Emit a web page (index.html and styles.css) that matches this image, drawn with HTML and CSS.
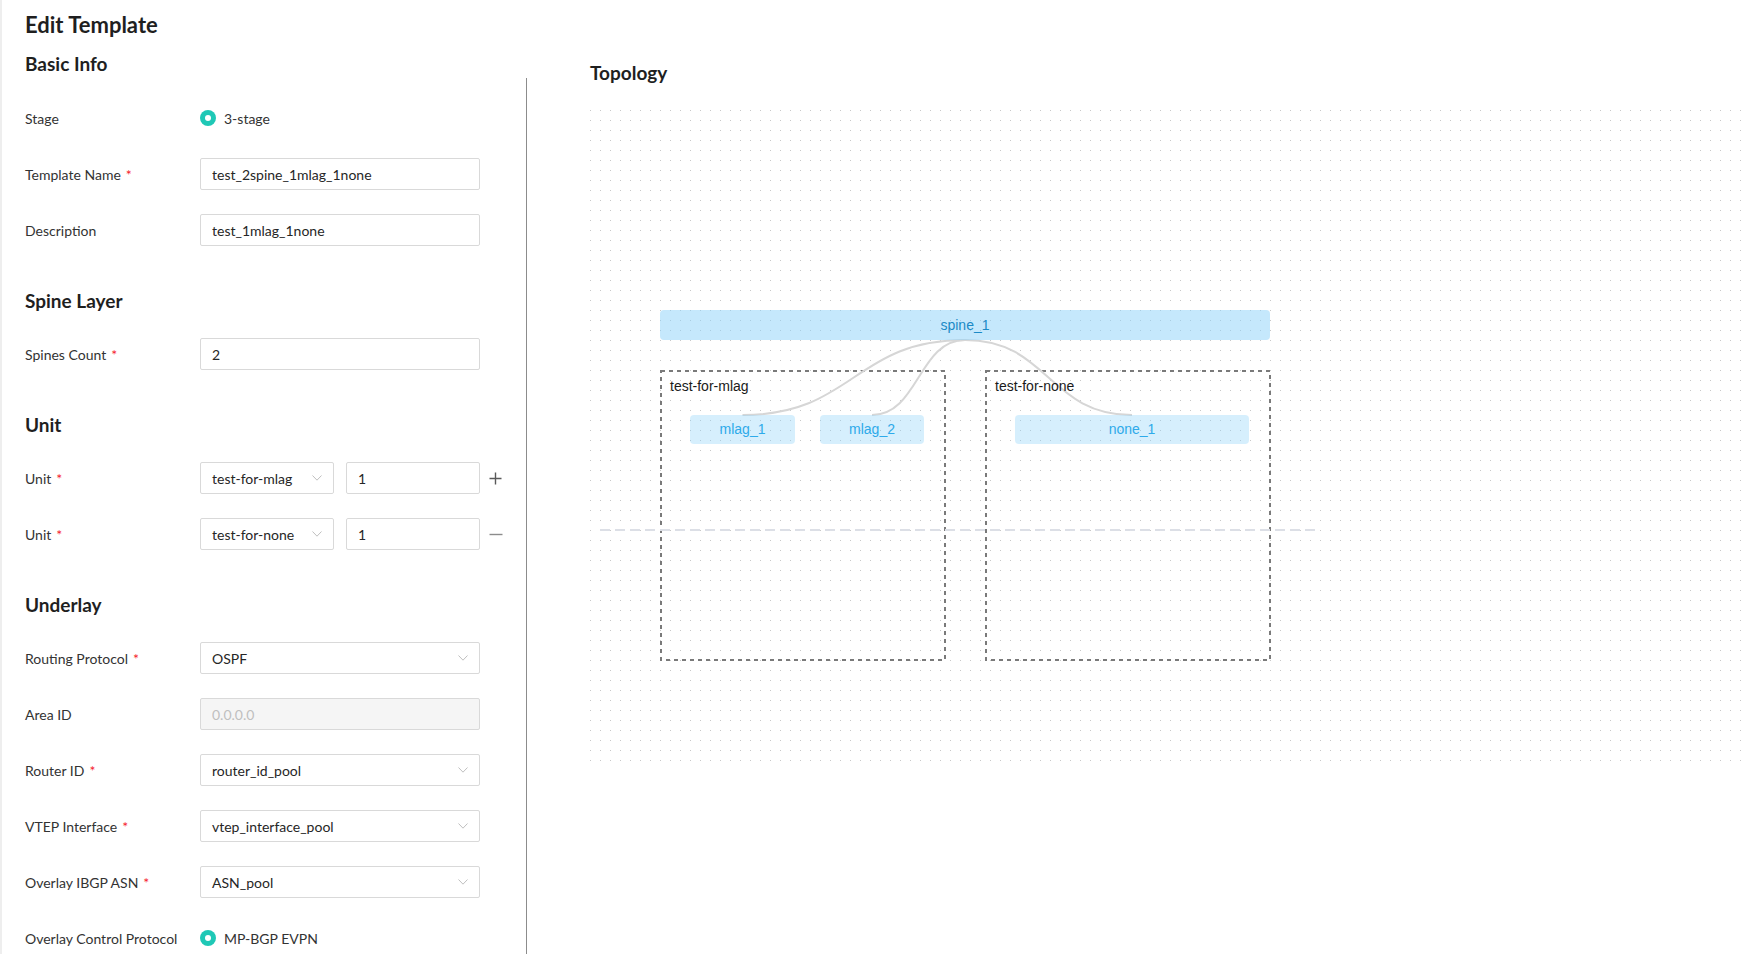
FILE: index.html
```html
<!DOCTYPE html>
<html lang="en">
<head>
    <meta charset="UTF-8">
    <meta name="viewport" content="width=device-width, initial-scale=1.0">
    <title>Edit Template</title>
    <link rel="stylesheet" href="styles.css">
</head>
<body>
    <div class="page">
        <h1 class="page-title">Edit Template</h1>
        <div class="layout">
            <div class="form-col">
                <h2 class="section-title">Basic Info</h2>
                <div class="form-body">
                    <section class="form-section">
                        <div class="form-row">
                            <label class="form-label">Stage</label>
                            <div class="radio"><span class="radio-dot"></span>3-stage</div>
                        </div>
                        <div class="form-row">
                            <label class="form-label">Template Name<span class="req">*</span></label>
                            <input class="input" type="text" value="test_2spine_1mlag_1none">
                        </div>
                        <div class="form-row">
                            <label class="form-label">Description</label>
                            <input class="input" type="text" value="test_1mlag_1none">
                        </div>
                    </section>

                    <section class="form-section">
                        <h2 class="section-title">Spine Layer</h2>
                        <div class="form-row">
                            <label class="form-label">Spines Count<span class="req">*</span></label>
                            <input class="input" type="text" value="2">
                        </div>
                    </section>

                    <section class="form-section">
                        <h2 class="section-title">Unit</h2>
                        <div class="form-row">
                            <label class="form-label">Unit<span class="req">*</span></label>
                            <div class="select select-short">
                                <span>test-for-mlag</span>
                                <svg class="chevron" width="10" height="6" viewBox="0 0 10 6"><polyline points="0.5,0.5 5,5.2 9.5,0.5"/></svg>
                            </div>
                            <input class="input input-short" type="text" value="1">
                            <button class="row-btn" type="button">
                                <svg width="13" height="13" viewBox="0 0 13 13"><path d="M6.5 0.5v12M0.5 6.5h12"/></svg>
                            </button>
                        </div>
                        <div class="form-row">
                            <label class="form-label">Unit<span class="req">*</span></label>
                            <div class="select select-short">
                                <span>test-for-none</span>
                                <svg class="chevron" width="10" height="6" viewBox="0 0 10 6"><polyline points="0.5,0.5 5,5.2 9.5,0.5"/></svg>
                            </div>
                            <input class="input input-short" type="text" value="1">
                            <button class="row-btn minus" type="button">
                                <svg width="14" height="13" viewBox="0 0 14 13"><path d="M0.5 6.5h13"/></svg>
                            </button>
                        </div>
                    </section>

                    <section class="form-section">
                        <h2 class="section-title">Underlay</h2>
                        <div class="form-row">
                            <label class="form-label">Routing Protocol<span class="req">*</span></label>
                            <div class="select">
                                <span>OSPF</span>
                                <svg class="chevron" width="10" height="6" viewBox="0 0 10 6"><polyline points="0.5,0.5 5,5.2 9.5,0.5"/></svg>
                            </div>
                        </div>
                        <div class="form-row">
                            <label class="form-label">Area ID</label>
                            <input class="input" type="text" value="0.0.0.0" disabled>
                        </div>
                        <div class="form-row">
                            <label class="form-label">Router ID<span class="req">*</span></label>
                            <div class="select">
                                <span>router_id_pool</span>
                                <svg class="chevron" width="10" height="6" viewBox="0 0 10 6"><polyline points="0.5,0.5 5,5.2 9.5,0.5"/></svg>
                            </div>
                        </div>
                        <div class="form-row">
                            <label class="form-label">VTEP Interface<span class="req">*</span></label>
                            <div class="select">
                                <span>vtep_interface_pool</span>
                                <svg class="chevron" width="10" height="6" viewBox="0 0 10 6"><polyline points="0.5,0.5 5,5.2 9.5,0.5"/></svg>
                            </div>
                        </div>
                        <div class="form-row">
                            <label class="form-label">Overlay IBGP ASN<span class="req">*</span></label>
                            <div class="select">
                                <span>ASN_pool</span>
                                <svg class="chevron" width="10" height="6" viewBox="0 0 10 6"><polyline points="0.5,0.5 5,5.2 9.5,0.5"/></svg>
                            </div>
                        </div>
                        <div class="form-row">
                            <label class="form-label">Overlay Control Protocol</label>
                            <div class="radio"><span class="radio-dot"></span>MP-BGP EVPN</div>
                        </div>
                    </section>
                </div>
            </div>

            <div class="topo-col">
                <h2 class="topo-title">Topology</h2>
                <div class="canvas">
                    <svg class="canvas-lines" width="100%" height="100%">
                        <!-- unit boxes -->
                        <rect class="unit-box" x="71" y="261" width="284" height="289"/>
                        <rect class="unit-box" x="396" y="261" width="284" height="289"/>
                        <!-- leaf level line -->
                        <line class="level-line" x1="10" y1="420" x2="725" y2="420"/>
                        <!-- links spine -> leafs -->
                        <path class="link" d="M375 230 C263.75 230 263.75 305 152.5 305"/>
                        <path class="link" d="M375 230 C328.5 230 328.5 305 282 305"/>
                        <path class="link" d="M375 230 C458.5 230 458.5 305 542 305"/>
                    </svg>

                    <div class="node spine" style="left:70px; top:200px; width:610px;">spine_1</div>

                    <div class="unit-label" style="left:80px; top:268px;">test-for-mlag</div>
                    <div class="unit-label" style="left:405px; top:268px;">test-for-none</div>

                    <div class="node leaf" style="left:100px; top:305px; width:105px;">mlag_1</div>
                    <div class="node leaf" style="left:230px; top:305px; width:104px;">mlag_2</div>
                    <div class="node leaf" style="left:425px; top:305px; width:234px;">none_1</div>
                </div>
            </div>
        </div>
    </div>
</body>
</html>
```

FILE: styles.css
```css
:root {
    --text-color: #333333;
    --title-color: #1f1f1f;
    --border-color: #d9d9d9;
    --required-color: #f5222d;
    --radio-color: #1fc8b6;
}

* {
    margin: 0;
    padding: 0;
    box-sizing: border-box;
}

html, body {
    height: 100%;
    overflow: hidden;
}

body {
    font-family: Lato, "Open Sans", sans-serif;
    font-size: 14px;
    color: var(--text-color);
    background: #ffffff;
}

.page {
    height: 100%;
    border-left: 2px solid #eeeeee;
    padding-top: 12px;
    display: flex;
    flex-direction: column;
}

.page-title {
    font-size: 22px;
    line-height: 26px;
    font-weight: 700;
    color: var(--title-color);
    padding-left: 23px;
    margin-bottom: 14px;
}

.layout {
    flex: 1;
    display: flex;
    min-height: 0;
}

/* left form */
.form-col {
    width: 525px;
    flex: none;
    padding-left: 23px;
    display: flex;
    flex-direction: column;
}

.section-title {
    font-size: 19px;
    line-height: 24px;
    font-weight: 700;
    color: var(--title-color);
}

.form-col > .section-title {
    margin-bottom: 2px;
}

.form-body {
    flex: 1;
    border-right: 1px solid #8c8c8c;
    padding-top: 24px;
}

.form-section {
    display: flex;
    flex-direction: column;
    gap: 24px;
}

.form-section + .form-section {
    margin-top: 43px;
}

.form-section .section-title {
    margin-bottom: 1px;
}

.form-row {
    display: flex;
    align-items: center;
    height: 32px;
}

.form-label {
    width: 175px;
    flex: none;
    color: var(--text-color);
}

.req {
    color: var(--required-color);
    margin-left: 5px;
}

.input,
.select {
    width: 280px;
    height: 32px;
    border: 1px solid var(--border-color);
    border-radius: 2px;
    padding: 0 11px;
    font-family: inherit;
    font-size: 14px;
    color: #262626;
    background: #ffffff;
    outline: none;
}

.input:disabled {
    background: #f5f5f5;
    color: #bfbfbf;
}

.select {
    display: flex;
    align-items: center;
    justify-content: space-between;
}

.chevron polyline {
    fill: none;
    stroke: #bfbfbf;
    stroke-width: 1;
}

.select-short {
    width: 134px;
}

.input-short {
    width: 134px;
    margin-left: 12px;
}

.row-btn {
    margin-left: 9px;
    border: none;
    background: none;
    display: flex;
    align-items: center;
    cursor: pointer;
}

.row-btn path {
    fill: none;
    stroke: #595959;
    stroke-width: 1.4;
}

.row-btn.minus path {
    stroke: #8c8c8c;
}

.radio {
    display: flex;
    align-items: center;
    gap: 8px;
    color: var(--text-color);
}

.radio-dot {
    position: relative;
    width: 16px;
    height: 16px;
    border-radius: 50%;
    background: var(--radio-color);
}

.radio-dot::after {
    content: '';
    position: absolute;
    top: 5px;
    left: 5px;
    width: 6px;
    height: 6px;
    border-radius: 50%;
    background: #ffffff;
}

/* topology */
.topo-col {
    flex: 1;
    padding-left: 63px;
    padding-top: 9px;
}

.topo-title {
    font-size: 19px;
    line-height: 24px;
    font-weight: 700;
    color: var(--title-color);
    margin-bottom: 25px;
}

.canvas {
    position: relative;
    height: 651px;
    background-color: #c8c8c8;
    background-image:
        linear-gradient(90deg, #ffffff 9px, transparent 9px),
        linear-gradient(#ffffff 9px, transparent 9px);
    background-size: 10px 10px;
    background-position: 1px 1px;
}

.canvas-lines {
    position: absolute;
    top: 0;
    left: 0;
    overflow: visible;
}

.unit-box {
    fill: none;
    stroke: #7a7a7a;
    stroke-width: 2;
    stroke-dasharray: 4 4;
}

.level-line {
    stroke: #dcdfe6;
    stroke-width: 2;
    stroke-dasharray: 10 5;
}

.link {
    fill: none;
    stroke: #d6d6d6;
    stroke-width: 2;
}

.node {
    position: absolute;
    height: 30px;
    border-radius: 4px;
    display: flex;
    align-items: center;
    justify-content: center;
    font-family: "Liberation Sans", Arial, sans-serif;
    font-size: 14px;
    padding-bottom: 1px;
}

.node.spine {
    background: rgba(140, 210, 250, 0.5);
    color: #1b8ac6;
}

.node.leaf {
    height: 29px;
    background: rgba(140, 210, 250, 0.36);
    color: #2eaaea;
}

.unit-label {
    position: absolute;
    font-family: "Liberation Sans", Arial, sans-serif;
    font-size: 14px;
    line-height: 16px;
    color: #1a1a1a;
}
```
